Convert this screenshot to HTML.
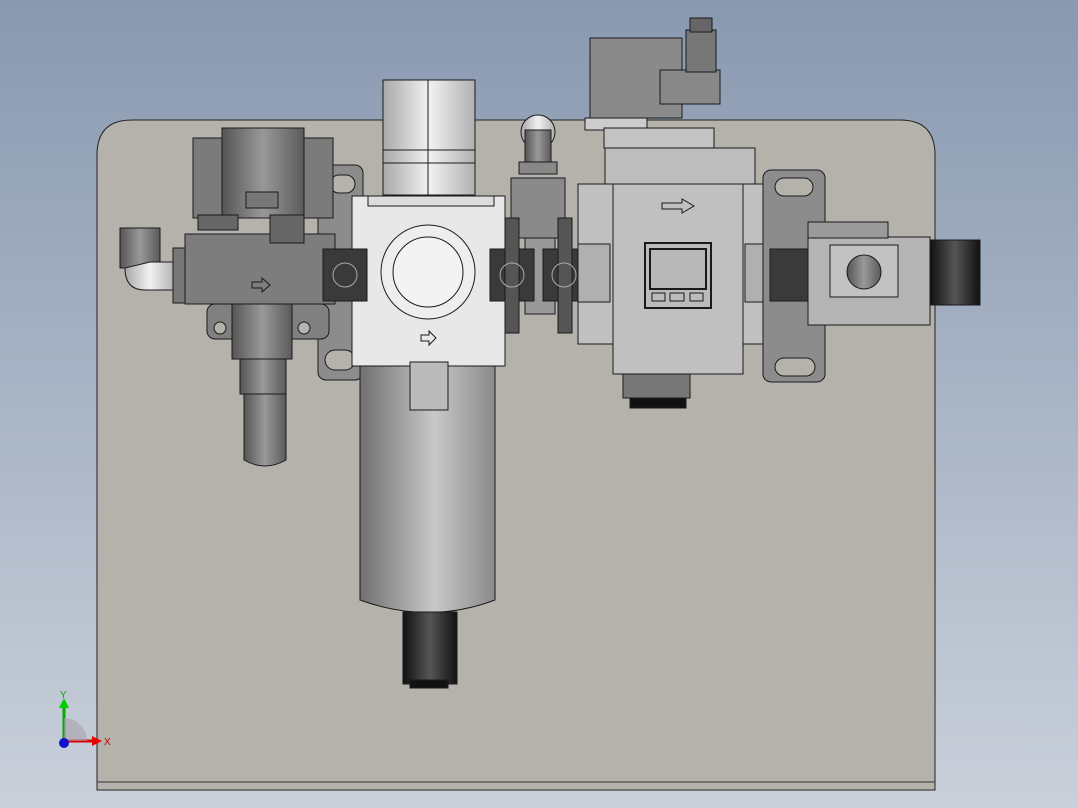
<!DOCTYPE html><html><head><style>html,body{margin:0;padding:0;width:1078px;height:808px;overflow:hidden}</style></head><body>
<svg width="1078" height="808" viewBox="0 0 1078 808" xmlns="http://www.w3.org/2000/svg" font-family="Liberation Sans, sans-serif">
<defs>
<linearGradient id="bg" x1="0" y1="0" x2="0" y2="1"><stop offset="0" stop-color="#8999b0"/><stop offset="1" stop-color="#c9d0da"/></linearGradient>
<linearGradient id="cylL" x1="0" x2="1"><stop offset="0" stop-color="#555"/><stop offset=".5" stop-color="#999"/><stop offset="1" stop-color="#5a5a5a"/></linearGradient>
<linearGradient id="cylW" x1="0" x2="1"><stop offset="0" stop-color="#a8a8a8"/><stop offset=".5" stop-color="#f2f2f2"/><stop offset="1" stop-color="#b0b0b0"/></linearGradient>
<linearGradient id="bowl" x1="0" x2="1"><stop offset="0" stop-color="#707070"/><stop offset=".55" stop-color="#c8c8c8"/><stop offset="1" stop-color="#8a8a8a"/></linearGradient>
<linearGradient id="dark" x1="0" x2="1"><stop offset="0" stop-color="#111"/><stop offset=".5" stop-color="#555"/><stop offset="1" stop-color="#111"/></linearGradient>
</defs>
<rect width="1078" height="808" fill="url(#bg)"/>
<path d="M97 790 V155 Q97 120 132 120 H900 Q935 120 935 155 V790 Z" fill="#b5b1ab" stroke="#222"/>
<line x1="97" y1="782" x2="935" y2="782" stroke="#333"/>
<g stroke="#1a1a1a" stroke-width="1">
<!-- left brackets -->
<rect x="318" y="165" width="45" height="215" rx="8" fill="#8c8c8c"/>
<rect x="330" y="175" width="25" height="18" rx="9" fill="#b5b1ab"/>
<rect x="325" y="350" width="30" height="20" rx="10" fill="#b5b1ab"/>
<!-- left valve -->
<rect x="120" y="228" width="40" height="40" fill="url(#cylL)"/>
<path d="M125 268 Q125 290 145 290 H175 V262 H150 Z" fill="url(#cylW)"/>
<rect x="173" y="248" width="14" height="55" fill="#777"/>
<rect x="193" y="138" width="140" height="80" fill="#7b7b7b"/>
<rect x="222" y="128" width="82" height="90" fill="url(#cylL)"/>
<rect x="246" y="192" width="32" height="16" fill="#777"/>
<rect x="185" y="234" width="150" height="70" fill="#7d7d7d"/>
<rect x="198" y="215" width="40" height="15" fill="#666"/><rect x="270" y="215" width="34" height="28" fill="#666"/>
<path d="M252 282h10v-4l8 7-8 7v-4h-10z" fill="none"/>
<rect x="207" y="304" width="122" height="35" rx="8" fill="#808080"/>
<circle cx="220" cy="328" r="6" fill="#b5b1ab"/><circle cx="304" cy="328" r="6" fill="#b5b1ab"/>
<rect x="232" y="304" width="60" height="55" fill="url(#cylL)"/>
<rect x="240" y="359" width="46" height="35" fill="url(#cylL)"/>
<path d="M244 394 V460 Q265 472 286 460 V394Z" fill="url(#cylL)"/>
<!-- filter -->
<rect x="383" y="80" width="92" height="115" fill="url(#cylW)"/>
<line x1="383" y1="150" x2="475" y2="150"/><line x1="383" y1="163" x2="475" y2="163"/><line x1="428" y1="80" x2="428" y2="195"/>
<rect x="352" y="196" width="153" height="170" fill="#e8e8e8"/>
<rect x="368" y="196" width="126" height="10" fill="#ddd"/>
<circle cx="428" cy="272" r="47" fill="#eee"/><circle cx="428" cy="272" r="35" fill="#f3f3f3"/>
<path d="M421 335h8v-4l7 7-7 7v-4h-8z" fill="none"/>
<path d="M360 366 V600 Q428 625 495 600 V366Z" fill="url(#bowl)"/>
<rect x="410" y="362" width="38" height="48" fill="#bbb"/>
<rect x="403" y="612" width="54" height="72" fill="url(#dark)"/>
<rect x="410" y="680" width="38" height="8" fill="#111"/>
<!-- gauge stem -->
<circle cx="538" cy="132" r="17" fill="url(#cylW)"/>
<rect x="525" y="130" width="26" height="32" fill="url(#cylL)"/>
<rect x="519" y="162" width="38" height="12" fill="#888"/>
<rect x="511" y="178" width="54" height="60" fill="#8a8a8a"/>
<rect x="525" y="238" width="30" height="76" fill="#999"/>
<!-- connectors -->
<g fill="#3a3a3a">
<rect x="323" y="249" width="44" height="52"/><rect x="490" y="249" width="44" height="52"/>
<rect x="543" y="249" width="43" height="52"/><rect x="770" y="249" width="43" height="52"/></g>
<rect x="505" y="218" width="14" height="115" fill="#555"/><rect x="558" y="218" width="14" height="115" fill="#555"/>
<g fill="none" stroke="#aaa"><circle cx="345" cy="275" r="12"/><circle cx="512" cy="275" r="12"/><circle cx="564" cy="275" r="12"/><circle cx="791" cy="275" r="12"/></g>
<!-- right unit -->
<rect x="590" y="38" width="92" height="80" fill="#8a8a8a"/>
<rect x="660" y="70" width="60" height="34" fill="#888"/>
<rect x="686" y="30" width="30" height="42" fill="#777"/><rect x="690" y="18" width="22" height="14" fill="#666"/>
<rect x="585" y="118" width="62" height="12" fill="#ccc"/>
<rect x="604" y="128" width="110" height="20" fill="#c3c3c3"/>
<rect x="605" y="148" width="150" height="36" fill="#bdbdbd"/>
<rect x="578" y="184" width="200" height="160" fill="#c0c0c0"/>
<rect x="613" y="184" width="130" height="190" fill="#c0c0c0"/>
<rect x="578" y="244" width="32" height="58" fill="#b0b0b0"/><rect x="745" y="244" width="30" height="58" fill="#b0b0b0"/>
<path d="M662 203h20v-4l12 7-12 7v-4h-20z" fill="none"/>
<rect x="645" y="243" width="66" height="65" fill="#bbb" stroke-width="2"/>
<rect x="650" y="249" width="56" height="40" fill="#b8b8b8" stroke-width="2"/>
<rect x="652" y="293" width="13" height="8" fill="none"/><rect x="670" y="293" width="14" height="8" fill="none"/><rect x="690" y="293" width="13" height="8" fill="none"/>
<rect x="623" y="374" width="67" height="24" fill="#777"/><rect x="630" y="398" width="56" height="10" fill="#111"/>
<!-- right bracket -->
<rect x="763" y="170" width="62" height="212" rx="8" fill="#8c8c8c"/>
<rect x="775" y="178" width="38" height="18" rx="9" fill="#b5b1ab"/>
<rect x="775" y="358" width="40" height="18" rx="9" fill="#b5b1ab"/>
<rect x="770" y="249" width="43" height="52" fill="#3a3a3a"/>
<!-- right fitting -->
<rect x="808" y="237" width="122" height="88" fill="#b5b5b5"/>
<rect x="808" y="222" width="80" height="16" fill="#9a9a9a"/>
<rect x="830" y="245" width="68" height="52" fill="#c2c2c2"/>
<circle cx="864" cy="272" r="17" fill="url(#cylL)"/>
<rect x="930" y="240" width="50" height="65" fill="url(#dark)"/>
</g>
<!-- axis triad -->
<g>
<path d="M64 741 L64 703" stroke="#0a0" stroke-width="3"/><path d="M59 708 L64 698 L69 708Z" fill="#0c0"/>
<path d="M64 741 L94 741" stroke="#d00" stroke-width="3"/><path d="M92 736 L102 741 L92 746Z" fill="#e00"/>
<path d="M64 741 L64 718 A23 23 0 0 1 87 741Z" fill="#a8a0a8" opacity=".6"/>
<circle cx="64" cy="743" r="5" fill="#11c"/>
<text x="60" y="698" font-size="10" fill="#0a0">Y</text>
<text x="104" y="745" font-size="10" fill="#c00">X</text>
</g>
</svg>
</body></html>
